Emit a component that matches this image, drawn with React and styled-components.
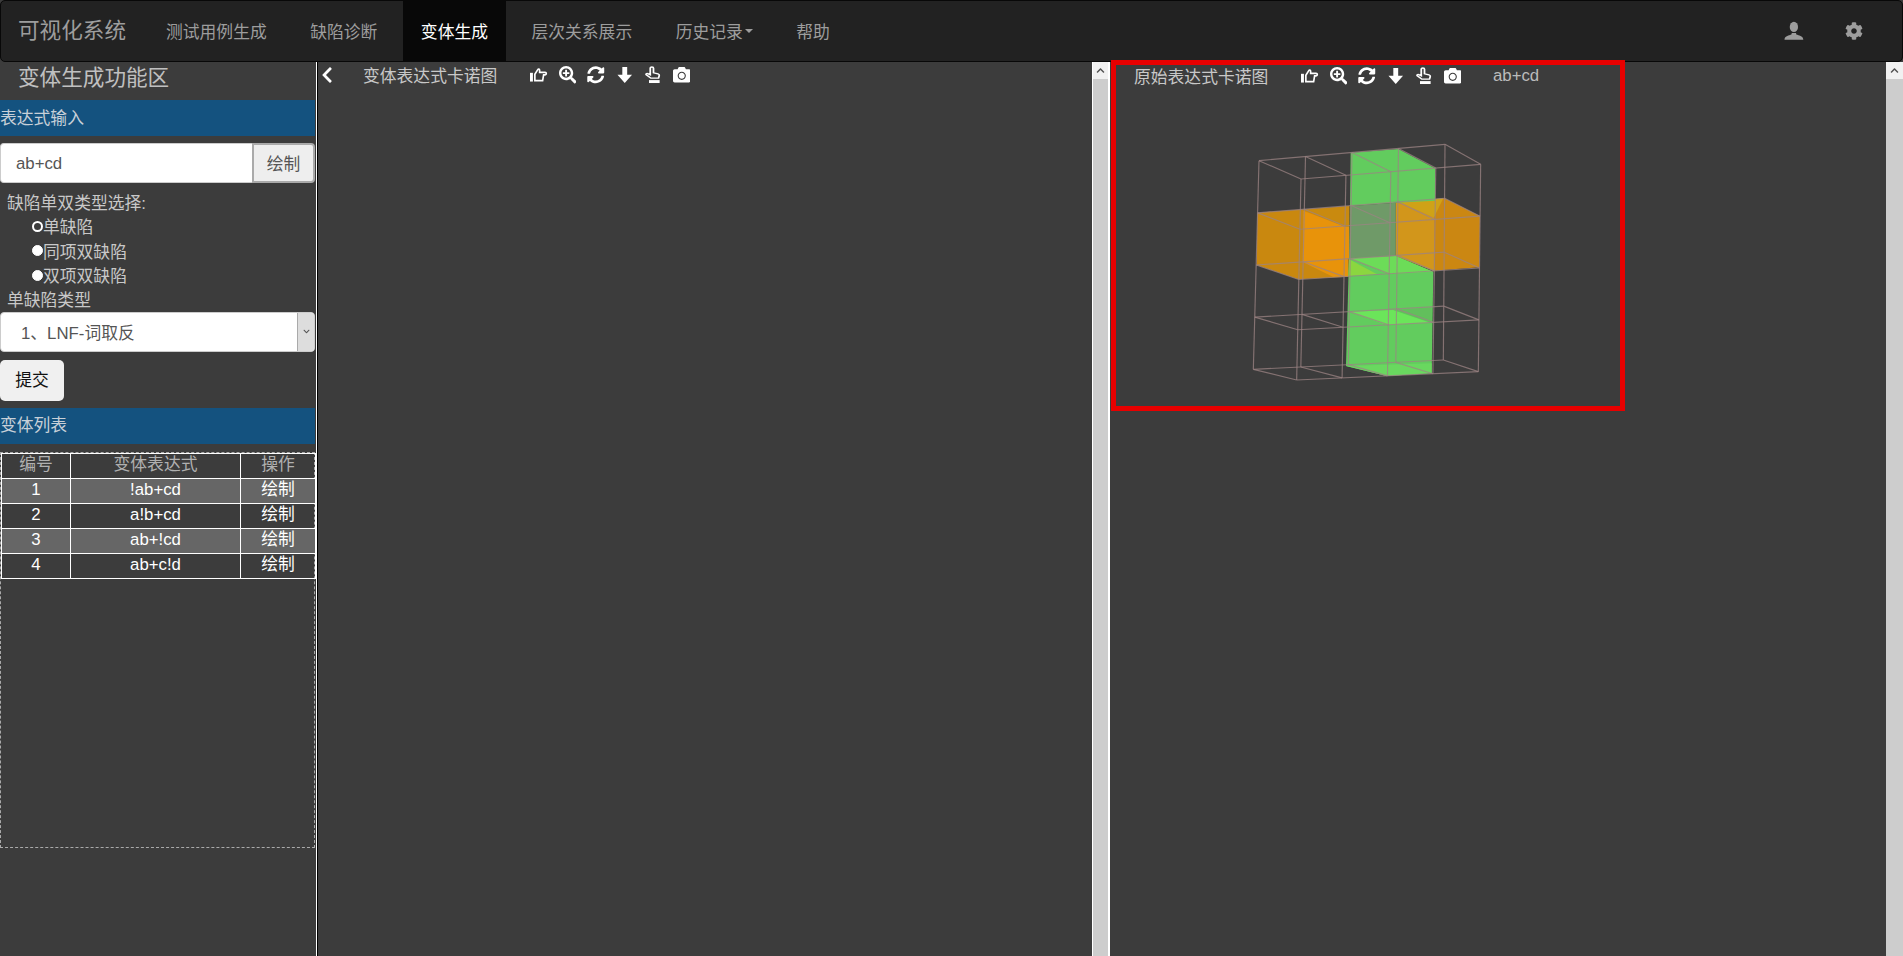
import React from "react";
import styled, { createGlobalStyle } from "styled-components";
import { FaSearchPlus, FaSyncAlt, FaCamera, FaCog, FaChevronLeft, FaChevronUp, FaChevronDown } from "react-icons/fa";

const GlobalStyle = createGlobalStyle`
  html, body {
    margin: 0;
    padding: 0;
    height: 100%;
    overflow: hidden;
    background: #3c3c3c;
    font-family: "Liberation Sans", "Noto Sans CJK SC", sans-serif;
    font-size: 16.8px;
  }
  * { box-sizing: border-box; }
`;

const NAV_ITEMS = ["测试用例生成", "缺陷诊断", "变体生成", "层次关系展示", "历史记录", "帮助"];
const VARIANTS = ["!ab+cd", "a!b+cd", "ab+!cd", "ab+c!d"];
const RADIOS = ["单缺陷", "同项双缺陷", "双项双缺陷"];

// back and front corners of the wire box, in 3x picture units
const BACK = { tl: [87, 92], tr: [645, 43], bl: [70, 718], br: [640, 690] };
const FRONT = { tl: [213, 147], tr: [752, 103], bl: [200, 750], br: [745, 725] };

function gridPoint(face, i, j) {
  const u = i / 4;
  const v = j / 4;
  const top = [0, 1].map((n) => face.tl[n] + (face.tr[n] - face.tl[n]) * u);
  const bottom = [0, 1].map((n) => face.bl[n] + (face.br[n] - face.bl[n]) * u);
  return top.map((t, n) => t + (bottom[n] - t) * v);
}

function wireLines() {
  const lines = [];
  [BACK, FRONT].forEach((face) => {
    for (let n = 0; n <= 4; n++) {
      lines.push([gridPoint(face, n, 0), gridPoint(face, n, 4)]);
      lines.push([gridPoint(face, 0, n), gridPoint(face, 4, n)]);
    }
  });
  for (let i = 0; i <= 4; i++) {
    for (let j = 0; j <= 4; j++) {
      lines.push([gridPoint(BACK, i, j), gridPoint(FRONT, i, j)]);
    }
  }
  return lines;
}

const FACES = [
  ["82,248 358,228 355,440 205,448 80,405", "#c9880f"],
  ["220,242 345,290 345,388 218,396", "#e8930a"],
  ["345,290 358,290 358,385 345,388", "#e8930a"],
  ["232,240 358,228 358,290 345,290", "#c98a0f"],
  ["218,396 355,385 355,440 310,441", "#e8930a"],
  ["497,218 643,205 750,258 748,412 610,422 497,378", "#cb8712"],
  ["497,218 612,210 612,422 497,378", "#d2961b"],
  ["505,216 640,205 612,262", "#cfa217"],
  ["362,68 505,57 615,115 615,212 497,218 360,228", "#62cc5e"],
  ["360,228 497,218 497,378 357,385", "#6f9a68"],
  ["357,385 497,378 610,425 605,730 470,738 348,708", "#62cc5e"],
  ["357,385 497,378 610,425 475,432", "#6cdc58"],
  ["357,388 440,432 355,438", "#8bd640"],
  ["357,545 490,540 600,578 470,585", "#6be55a"],
  ["490,540 605,532 605,578", "#62bf5c"],
  ["348,708 605,700 605,730 470,738", "#69d85f"],
];

function KarnaughCube() {
  return (
    <CubeSvg viewBox="0 0 870 780">
      {FACES.map(([points, fill]) => (
        <polygon key={points} points={points} fill={fill} />
      ))}
      {wireLines().map(([a, b], n) => (
        <line key={n} x1={a[0]} y1={a[1]} x2={b[0]} y2={b[1]} stroke="#9c8484" strokeWidth="3.5" opacity="0.75" />
      ))}
    </CubeSvg>
  );
}

function HandRightIcon() {
  return (
    <svg viewBox="0 0 18 18" width="1em" height="1em">
      <rect x="0" y="7" width="3" height="9" fill="currentColor" />
      <path
        d="M5 8.5l3-4.8c.6-.9 1.9-.5 1.9.6V6.5h5.6a1.3 1.3 0 0 1 0 2.6H14l-1 6H5z"
        fill="none"
        stroke="currentColor"
        strokeWidth="1.7"
      />
    </svg>
  );
}

function HandUpIcon() {
  return (
    <svg viewBox="2 0 14 18" width="1em" height="1em" preserveAspectRatio="none">
      <path
        d="M7 2.3a1.3 1.3 0 0 1 2.6 0V7l3.6 1.2c.8.3 1.1.9 1 1.6l-.6 2.7H7.5L3.8 9c-.6-.8.3-1.7 1.2-1.2L7 9z"
        fill="none"
        stroke="currentColor"
        strokeWidth="1.4"
      />
      <rect x="6" y="14.5" width="8.5" height="3" fill="currentColor" />
    </svg>
  );
}

function ArrowDownIcon() {
  return (
    <svg viewBox="0 0 18 18" width="1em" height="1em">
      <path d="M6.5 1h5v8h5L9 17.5 1.5 9h5z" fill="currentColor" />
    </svg>
  );
}

function UserIcon() {
  return (
    <svg viewBox="0 0 20 20" width="1.1em" height="1.1em">
      <ellipse cx="10" cy="6" rx="4.2" ry="5.2" fill="currentColor" />
      <path d="M0.5 19c0-3 3-4 6-5 1-.4 1.3-1 1.3-2h4.4c0 1 .3 1.6 1.3 2 3 1 6 2 6 5z" fill="currentColor" />
    </svg>
  );
}

function ToolIcons() {
  return (
    <ToolGroup>
      <HandRightIcon />
      <FaSearchPlus />
      <FaSyncAlt />
      <ArrowDownIcon />
      <HandUpIcon />
      <FaCamera />
    </ToolGroup>
  );
}

function ScrollRail({ wide }) {
  return (
    <Rail $wide={wide}>
      <RailButton>
        <FaChevronUp />
      </RailButton>
      <RailThumb />
    </Rail>
  );
}

export default function App() {
  return (
    <Page>
      <GlobalStyle />
      <Navbar>
        <Brand>可视化系统</Brand>
        <NavList>
          {NAV_ITEMS.map((item) => (
            <NavLink key={item} $active={item === "变体生成"}>
              {item}
              {item === "历史记录" && <Caret />}
            </NavLink>
          ))}
        </NavList>
        <NavIcons>
          <UserIcon />
          <FaCog />
        </NavIcons>
      </Navbar>
      <Main>
        <Sidebar>
          <SideTitle>变体生成功能区</SideTitle>
          <SectionBar>表达式输入</SectionBar>
          <InputRow>
            <ExprInput>ab+cd</ExprInput>
            <DrawButton>绘制</DrawButton>
          </InputRow>
          <TypeLabel>缺陷单双类型选择:</TypeLabel>
          <RadioList>
            {RADIOS.map((radio, n) => (
              <RadioRow key={radio}>
                <RadioDot $checked={n === 0} />
                {radio}
              </RadioRow>
            ))}
          </RadioList>
          <FieldLabel>单缺陷类型</FieldLabel>
          <SelectBox>
            <SelectText>1、LNF-词取反</SelectText>
            <SelectArrow>
              <FaChevronDown />
            </SelectArrow>
          </SelectBox>
          <SubmitButton>提交</SubmitButton>
          <ListBar>变体列表</ListBar>
          <TableBox>
            <VariantTable>
              <thead>
                <tr>
                  <HeadCell $width={69}>编号</HeadCell>
                  <HeadCell $width={170}>变体表达式</HeadCell>
                  <HeadCell $width={75}>操作</HeadCell>
                </tr>
              </thead>
              <tbody>
                {VARIANTS.map((expr, n) => (
                  <VariantRow key={expr} $striped={n % 2 === 0}>
                    <Cell>{n + 1}</Cell>
                    <Cell>{expr}</Cell>
                    <Cell>绘制</Cell>
                  </VariantRow>
                ))}
              </tbody>
            </VariantTable>
          </TableBox>
        </Sidebar>
        <MiddlePanel>
          <Toolbar>
            <BackIcon>
              <FaChevronLeft />
            </BackIcon>
            <MiddleTitle>变体表达式卡诺图</MiddleTitle>
            <ToolIcons />
          </Toolbar>
        </MiddlePanel>
        <ScrollRail wide />
        <RightPanel>
          <RedBox>
            <BoxHeader>
              <BoxTitle>原始表达式卡诺图</BoxTitle>
              <ToolIcons />
              <ExprLabel>ab+cd</ExprLabel>
            </BoxHeader>
            <KarnaughCube />
          </RedBox>
        </RightPanel>
        <ScrollRail />
      </Main>
    </Page>
  );
}

const Page = styled.div`
  height: 100vh;
  display: flex;
  flex-direction: column;
  overflow: hidden;
  background: #3c3c3c;
  color: #c8c8c8;
`;

const Navbar = styled.nav`
  height: 62px;
  flex: none;
  display: flex;
  align-items: stretch;
  background: #222;
  border: 1px solid #080808;
  border-radius: 5px;
`;

const Brand = styled.div`
  width: 147px;
  padding-left: 17px;
  font-size: 21.6px;
  line-height: 60px;
  color: #9d9d9d;
`;

const NavList = styled.div`
  display: flex;
  gap: 7.5px;
`;

const NavLink = styled.div`
  display: flex;
  align-items: center;
  padding: 0 18px;
  color: ${(props) => (props.$active ? "#fff" : "#9d9d9d")};
  background: ${(props) => (props.$active ? "#080808" : "transparent")};
`;

const Caret = styled.span`
  margin-left: 2px;
  border-top: 4px solid #9d9d9d;
  border-left: 4px solid transparent;
  border-right: 4px solid transparent;
`;

const NavIcons = styled.div`
  margin-left: auto;
  padding-right: 39px;
  display: flex;
  align-items: center;
  gap: 41px;
  color: #9d9d9d;
  font-size: 18px;
`;

const Main = styled.div`
  flex: 1;
  min-height: 0;
  display: flex;
`;

const Sidebar = styled.aside`
  width: 318px;
  flex: none;
  border-right: 1px solid #000;
  box-shadow: inset -1px 0 0 #fff;
  padding-right: 2px;
`;

const SideTitle = styled.div`
  height: 38px;
  padding-left: 18px;
  font-size: 21.6px;
  line-height: 32px;
  color: #c0c0c0;
`;

const SectionBar = styled.div`
  height: 36px;
  line-height: 38px;
  background: #14527f;
  color: #c8d0d8;
`;

const ListBar = styled(SectionBar)`
  margin-top: 7px;
  line-height: 36px;
`;

const InputRow = styled.div`
  display: flex;
  height: 40px;
  margin-top: 7px;
`;

const ExprInput = styled.div`
  flex: 1;
  padding-left: 15px;
  line-height: 40px;
  color: #555;
  background: #fff;
  border: 1px solid #ccc;
  border-right: 0;
  border-radius: 4px 0 0 4px;
`;

const DrawButton = styled.div`
  width: 63px;
  text-align: center;
  line-height: 40px;
  color: #555;
  background: #eee;
  border: 2px solid #aaa;
  border-radius: 0 4px 4px 0;
`;

const FieldLabel = styled.div`
  height: 25px;
  line-height: 25px;
  padding-left: 7px;
`;

const TypeLabel = styled(FieldLabel)`
  margin: 8px 0 -2px;
`;

const RadioList = styled.div`
  padding-left: 32px;
`;

const RadioRow = styled.div`
  display: flex;
  align-items: center;
  height: 24.6px;
`;

const RadioDot = styled.span`
  width: 11px;
  height: 11px;
  border-radius: 50%;
  background: ${(props) => (props.$checked ? "#3c3c3c" : "#fff")};
  border: ${(props) => (props.$checked ? "2.5px" : "1px")} solid #fff;
`;

const SelectBox = styled.div`
  display: flex;
  height: 40px;
  margin-top: -1px;
  background: #fff;
  border: 1px solid #ccc;
  border-radius: 4px;
  overflow: hidden;
`;

const SelectText = styled.div`
  flex: 1;
  padding-left: 20px;
  line-height: 42px;
  color: #555;
`;

const SelectArrow = styled.div`
  width: 17px;
  display: flex;
  align-items: center;
  justify-content: center;
  background: #ddd;
  border-left: 1px solid #aaa;
  color: #555;
  font-size: 7px;
`;

const SubmitButton = styled.div`
  width: 64px;
  height: 41px;
  margin-top: 8px;
  text-align: center;
  line-height: 41px;
  color: #111;
  background: #f0f0f0;
  border-radius: 5px;
`;

const TableBox = styled.div`
  height: 396px;
  margin-top: 8px;
  border: 1px dashed #aaa;
`;

const VariantTable = styled.table`
  width: 314px;
  border-collapse: collapse;
  table-layout: fixed;
  color: #fff;
`;

const HeadCell = styled.th`
  width: ${(props) => props.$width}px;
  height: 25px;
  padding: 0 0 2px;
  line-height: 22px;
  font-weight: 400;
  color: #b0b0b0;
  border: 1px solid #fff;
`;

const VariantRow = styled.tr`
  background: ${(props) => (props.$striped ? "#666" : "transparent")};
`;

const Cell = styled.td`
  height: 25px;
  padding: 0 0 2px;
  line-height: 22px;
  text-align: center;
  border: 1px solid #fff;
`;

const MiddlePanel = styled.section`
  width: 774px;
  flex: none;
`;

const Toolbar = styled.div`
  height: 26px;
  display: flex;
  align-items: center;
`;

const BackIcon = styled.span`
  display: flex;
  width: 45px;
  color: #fff;
  font-size: 18px;
`;

const MiddleTitle = styled.span`
  width: 167px;
`;

const ToolGroup = styled.span`
  display: flex;
  align-items: center;
  gap: 11px;
  color: #fff;
  font-size: 17.5px;
`;

const Rail = styled.div`
  flex: none;
  width: ${(props) => (props.$wide ? "18px" : "17px")};
  background: #cdcdcd;
  border-left: ${(props) => (props.$wide ? "1px solid #fff" : "0")};
  border-right: ${(props) => (props.$wide ? "2px solid #fff" : "0")};
`;

const RailButton = styled.div`
  height: 17px;
  display: flex;
  align-items: center;
  justify-content: center;
  background: #f1f1f1;
  color: #505050;
  font-size: 9px;
`;

const RailThumb = styled.div`
  height: 100%;
`;

const RightPanel = styled.section`
  flex: 1;
  min-width: 0;
  padding-left: 1px;
`;

const RedBox = styled.div`
  position: relative;
  width: 514px;
  height: 351px;
  margin-top: -2px;
  border: 5px solid #e80000;
`;

const BoxHeader = styled.div`
  height: 22px;
  display: flex;
  align-items: center;
  padding-left: 18px;
`;

const BoxTitle = styled.span`
  width: 167px;
`;

const ExprLabel = styled.span`
  margin-left: 32px;
  color: #bbb;
`;

const CubeSvg = styled.svg`
  display: block;
  width: 290px;
  height: 260px;
  margin: 43px 0 0 114px;
`;
